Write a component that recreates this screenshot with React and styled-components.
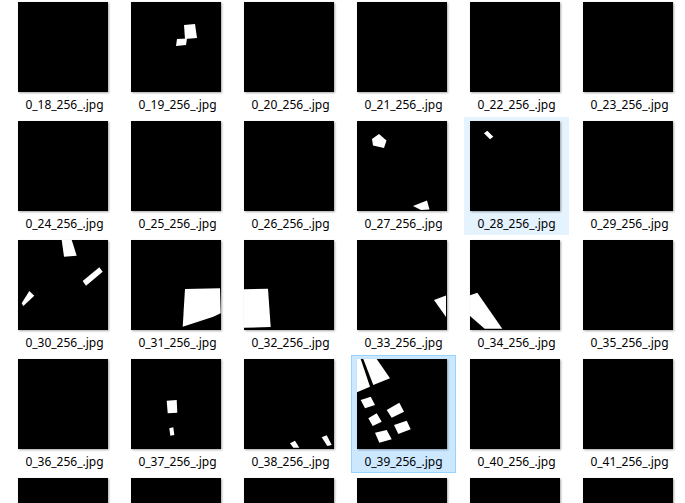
import React from 'react';
import styled, { createGlobalStyle } from 'styled-components';

const GlobalStyle = createGlobalStyle`
  html, body {
    margin: 0;
    padding: 0;
    background: #ffffff;
    overflow: hidden;
  }
  body {
    font-family: "Noto Sans", "Noto Sans CJK SC", sans-serif;
  }
`;

// white mask shapes per image, in 90x90 thumbnail coordinates
const shapes = {
  19: [
    '53,23 64,22 66,36 54,37',
    '46,37 56,36.5 55,43 45,44',
  ],
  27: [
    '15,18 22,13 29.5,19.5 27,27 16,24.5',
    '56,85 70,79.5 72.5,88.5 64,89',
  ],
  28: ['14,12.3 17.3,9.7 23.3,15.7 20,18.3'],
  30: [
    '43.7,0 53.7,0 58.7,15.7 46,16.7',
    '64.7,41 81.3,27.3 84.7,31.7 68,45.7',
    '3.7,63.3 11.3,51 16.3,55.7 5.3,66',
  ],
  31: ['54,49 89,48.3 89.7,73.3 82.3,76.7 51.7,86.7'],
  32: ['0,49.3 24,48.7 26.7,87 0,87.7'],
  33: ['77,60 89,55.5 89,77'],
  34: ['0,55.3 7.3,52.7 32.3,88.7 14.7,88.7 0,76'],
  37: [
    '35.7,41.7 45.7,41 46.3,53.7 36.7,54.3',
    '38.3,69.3 42.3,68.3 43.3,76 39.3,76.7',
  ],
  38: [
    '46,84.3 51,81.7 55.3,88.7 49.3,88.7',
    '77.7,78.3 82.7,76.3 87.7,86 83.3,87',
  ],
  39: [
    '0,0 3.7,0 13,27.7 0,33.3',
    '6.3,0 19.7,0 33,19.3 16.3,26',
    '3.7,41 13.7,37.7 18,46 8,49.3',
    '11.3,59.3 19.7,54.3 24.7,62.7 15.7,67',
    '29.7,51 42.3,43.7 47,52.7 34.7,58.7',
    '37,66 49.7,61.7 53.7,70.3 41.3,75',
    '18,73.7 29.7,71 34.7,80.3 22.3,83.7',
  ],
};

const items = Array.from({ length: 30 }, (_, i) => {
  const n = 18 + i;
  return {
    n,
    name: `0_${n}_256_.jpg`,
    state: n === 39 ? 'selected' : n === 28 ? 'hover' : null,
  };
});

export default function App() {
  return (
    <>
      <GlobalStyle />
      <View>
        <Grid>
          {items.map(item => (
            <Cell key={item.n} $state={item.state}>
              <Thumb>
                <svg width="90" height="90" viewBox="0 0 90 90">
                  <rect width="90" height="90" fill="#000" />
                  {(shapes[item.n] || []).map((p, i) => (
                    <polygon key={i} points={p} fill="#fff" />
                  ))}
                </svg>
              </Thumb>
              <Label>{item.name}</Label>
            </Cell>
          ))}
        </Grid>
      </View>
    </>
  );
}

const View = styled.div`
  height: 100vh;
  overflow: hidden;
`;

const Grid = styled.div`
  display: grid;
  grid-template-columns: repeat(6, 105px);
  grid-auto-rows: 118px;
  column-gap: 8px;
  row-gap: 1px;
  padding-left: 12px;
  margin-top: -2px;
`;

const Cell = styled.div`
  box-sizing: border-box;
  display: flex;
  flex-direction: column;
  align-items: flex-start;
  padding: 3px 0 0 5px;
  border: 1px solid
    ${p => (p.$state === 'selected' ? '#99d1ff' : 'transparent')};
  background: ${p =>
    p.$state === 'selected'
      ? '#cce8ff'
      : p.$state === 'hover'
      ? '#e5f3ff'
      : 'transparent'};
`;

const Thumb = styled.div`
  width: 90px;
  height: 90px;
  box-shadow: 1px 1px 2px rgba(0, 0, 0, 0.35);
  svg {
    display: block;
  }
`;

const Label = styled.div`
  align-self: stretch;
  margin: 5px 0 0 -5px;
  font-size: 12px;
  line-height: 16px;
  color: #000;
  text-align: center;
  white-space: nowrap;
`;
